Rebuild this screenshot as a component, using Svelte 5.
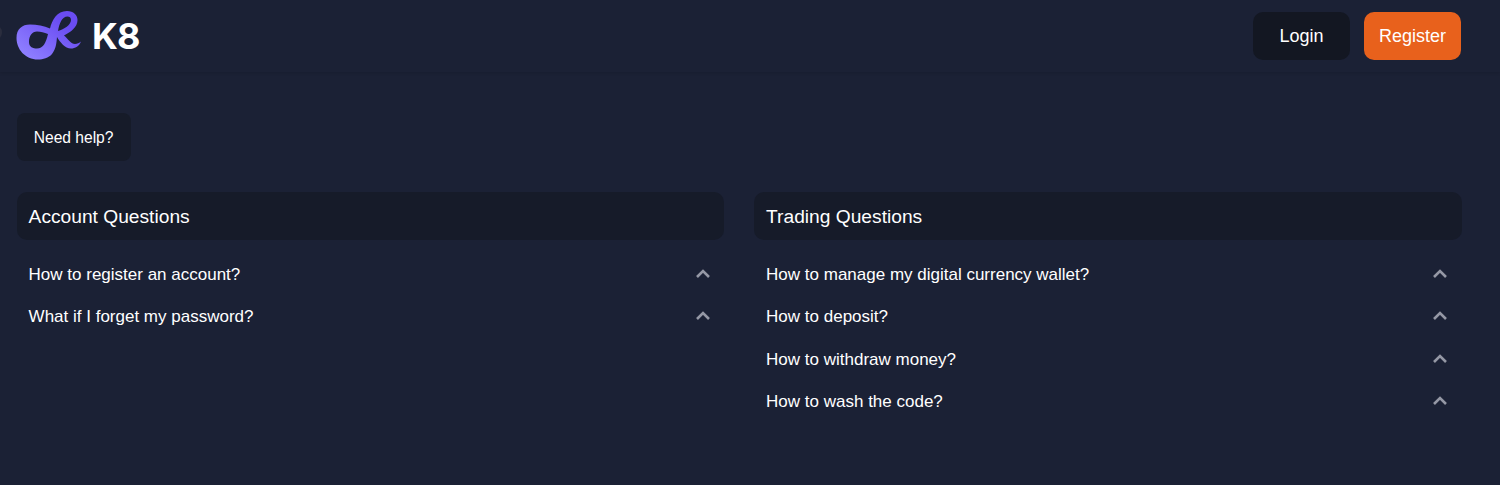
<script>
  const groups = [
    { title: "Account Questions", items: ["How to register an account?", "What if I forget my password?"] },
    { title: "Trading Questions", items: ["How to manage my digital currency wallet?", "How to deposit?", "How to withdraw money?", "How to wash the code?"] }
  ];
</script>

<style>
  :global(body) {
    margin: 0;
    background: #1b2135;
    font-family: "Liberation Sans", Arial, sans-serif;
    color: #fff;
  }

  .header {
    position: relative;
    height: 72px;
    box-sizing: border-box;
    padding: 12px 39px 12px 16px;
    display: flex;
    align-items: center;
    justify-content: space-between;
    box-shadow: 0 1px 3px rgba(0, 0, 0, 0.12);
    overflow: hidden;
  }

  .edge-dot {
    position: absolute;
    left: -15px;
    top: 24px;
    width: 17px;
    height: 17px;
    border-radius: 50%;
    background: #2a2d3e;
  }

  .brand {
    display: flex;
    align-items: center;
    gap: 10px;
  }

  .brand-name {
    font-family: Inter, "Liberation Sans", sans-serif;
    font-size: 36px;
    font-weight: 700;
    line-height: 1;
    letter-spacing: -1px;
  }

  .actions {
    display: flex;
    gap: 14px;
  }

  .btn {
    width: 97px;
    height: 48px;
    border: 0;
    border-radius: 10px;
    color: #fff;
    font: 18px "Liberation Sans", Arial, sans-serif;
    padding: 0;
  }

  .login {
    background: #131722;
  }

  .register {
    background: #e8611c;
  }

  .content {
    padding: 41px 38.4px 0 16.6px;
  }

  .help {
    width: 114px;
    height: 48px;
    box-sizing: border-box;
    padding-top: 1px;
    border-radius: 8px;
    background: #161b29;
    font-size: 15.6px;
    display: flex;
    align-items: center;
    justify-content: center;
  }

  .columns {
    margin-top: 31px;
    display: grid;
    grid-template-columns: 1fr 1fr;
    gap: 30px;
  }

  .group-title {
    height: 48px;
    box-sizing: border-box;
    padding: 1px 12px 0;
    border-radius: 10px;
    background: #161b29;
    font-size: 19.2px;
    display: flex;
    align-items: center;
  }

  .list {
    margin-top: 13.3px;
  }

  .row {
    height: 42.5px;
    padding: 0 12px;
    display: flex;
    align-items: center;
    justify-content: space-between;
    font-size: 17px;
  }

  .chevron {
    width: 14px;
    height: 9px;
    margin-right: 2.5px;
    margin-top: -2.6px;
    color: #9598a5;
  }
</style>

<div class="header">
  <span class="edge-dot"></span>
  <div class="brand">
    <svg width="66" height="50" viewBox="16 11 66 50" aria-hidden="true">
      <defs>
        <linearGradient id="logo-fill" x1="0" y1="1" x2="1" y2="0">
          <stop offset="0.1" stop-color="#8f80ff" />
          <stop offset="0.75" stop-color="#6a4cf2" />
        </linearGradient>
      </defs>
      <path fill="url(#logo-fill)" fill-rule="evenodd" d="M16.5 38C16.5 29 22 24.5 30 24.5 37 24.5 44 26 50 28.5 52 20 57 11 67 11 73.5 11 77.5 15 77.5 20 77.5 27 71 32 64 35.5 68 39 71 44 75 44 77 44 79.5 43 81 41.5 79.5 46 75 48.5 71 48.5 65 48.5 60 42 57 37 56.5 43 56 49 52 54 48.5 58 43 59.5 38 59.5 25 59.5 16.5 49 16.5 38ZM29 42C29 47 33 48.5 37 48.5 43 48.5 46 43 48 34 44 32.5 41 31.5 37 31.5 32 31.5 29 36 29 42ZM58 31C64 29 71 25 71 20 71 17.5 69.5 16.5 67.5 16.5 62 16.5 59.5 23 58 31Z" />
    </svg>
    <span class="brand-name">K8</span>
  </div>
  <div class="actions">
    <button class="btn login">Login</button>
    <button class="btn register">Register</button>
  </div>
</div>

<div class="content">
  <div class="help">Need help?</div>
  <div class="columns">
    {#each groups as group}
      <div>
        <div class="group-title">{group.title}</div>
        <div class="list">
          {#each group.items as item}
            <div class="row">
              <span>{item}</span>
              <svg class="chevron" viewBox="0 0 14 9" fill="none" stroke="currentColor" stroke-width="2.6">
                <path d="M1 8 7 2 13 8" />
              </svg>
            </div>
          {/each}
        </div>
      </div>
    {/each}
  </div>
</div>
